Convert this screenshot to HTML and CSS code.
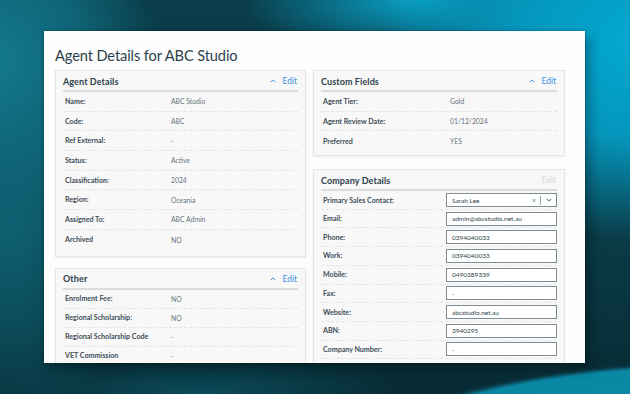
FILE: index.html
```html
<!DOCTYPE html>
<html>
<head>
<meta charset="utf-8">
<link rel="stylesheet" href="styles.css">
</head>
<body>
<div class="window">
  <h1 class="title">Agent Details for ABC Studio</h1>
  <div class="columns">
    <div class="col">
      <section class="panel">
        <div class="phead"><span class="ptitle">Agent Details</span><span class="actions"><svg class="chev" viewBox="0 0 8 5" width="6" height="4"><path d="M1 4 L4 1 L7 4" fill="none" stroke="#3a8ee0" stroke-width="1.3"/></svg><span class="edit">Edit</span></span></div>
        <div class="rows">
          <div class="row"><span class="lab">Name:</span><span class="val">ABC Studio</span></div>
          <div class="row"><span class="lab">Code:</span><span class="val">ABC</span></div>
          <div class="row"><span class="lab">Ref External:</span><span class="val">-</span></div>
          <div class="row"><span class="lab">Status:</span><span class="val">Active</span></div>
          <div class="row"><span class="lab">Classification:</span><span class="val">2024</span></div>
          <div class="row"><span class="lab">Region:</span><span class="val">Oceania</span></div>
          <div class="row"><span class="lab">Assigned To:</span><span class="val">ABC Admin</span></div>
          <div class="row last"><span class="lab">Archived</span><span class="val">NO</span></div>
        </div>
      </section>
      <section class="panel">
        <div class="phead"><span class="ptitle">Other</span><span class="actions"><svg class="chev" viewBox="0 0 8 5" width="6" height="4"><path d="M1 4 L4 1 L7 4" fill="none" stroke="#3a8ee0" stroke-width="1.3"/></svg><span class="edit">Edit</span></span></div>
        <div class="rows other">
          <div class="row"><span class="lab">Enrolment Fee:</span><span class="val">NO</span></div>
          <div class="row"><span class="lab">Regional Scholarship:</span><span class="val">NO</span></div>
          <div class="row"><span class="lab">Regional Scholarship Code</span><span class="val">-</span></div>
          <div class="row"><span class="lab">VET Commission</span><span class="val">-</span></div>
        </div>
      </section>
    </div>
    <div class="col">
      <section class="panel short">
        <div class="phead"><span class="ptitle">Custom Fields</span><span class="actions"><svg class="chev" viewBox="0 0 8 5" width="6" height="4"><path d="M1 4 L4 1 L7 4" fill="none" stroke="#3a8ee0" stroke-width="1.3"/></svg><span class="edit">Edit</span></span></div>
        <div class="rows">
          <div class="row"><span class="lab wide">Agent Tier:</span><span class="val">Gold</span></div>
          <div class="row"><span class="lab wide">Agent Review Date:</span><span class="val">01/12/2024</span></div>
          <div class="row last"><span class="lab wide">Preferred</span><span class="val">YES</span></div>
        </div>
      </section>
      <section class="panel">
        <div class="phead"><span class="ptitle">Company Details</span><span class="actions"><span class="edit muted">Edit</span></span></div>
        <div class="rows form">
          <div class="frow"><span class="lab">Primary Sales Contact:</span>
            <div class="input select"><span class="itext">Sarah Lee</span><span class="clear">×</span><span class="sep"></span><svg class="dd" viewBox="0 0 8 5" width="6" height="4"><path d="M1 1 L4 4 L7 1" fill="none" stroke="#3c4c56" stroke-width="1.2"/></svg></div></div>
          <div class="frow"><span class="lab">Email:</span><div class="input"><span class="itext">admin@abcstudio.net.au</span></div></div>
          <div class="frow"><span class="lab">Phone:</span><div class="input"><span class="itext">0394040033</span></div></div>
          <div class="frow"><span class="lab">Work:</span><div class="input"><span class="itext">0394040033</span></div></div>
          <div class="frow"><span class="lab">Mobile:</span><div class="input"><span class="itext">0490389339</span></div></div>
          <div class="frow"><span class="lab">Fax:</span><div class="input"><span class="itext">-</span></div></div>
          <div class="frow"><span class="lab">Website:</span><div class="input"><span class="itext">abcstudio.net.au</span></div></div>
          <div class="frow"><span class="lab">ABN:</span><div class="input"><span class="itext">3940295</span></div></div>
          <div class="frow"><span class="lab">Company Number:</span><div class="input"><span class="itext">-</span></div></div>
        </div>
      </section>
    </div>
  </div>
</div>
</body>
</html>
```
FILE: styles.css
```css
html, body {
  margin: 0;
  padding: 0;
}
body {
  width: 630px;
  height: 394px;
  overflow: hidden;
  box-sizing: border-box;
  padding: 31px 0 0 44px;
  font-family: Lato, "Noto Sans", sans-serif;
  background:
    radial-gradient(ellipse 420px 140px at 720px 500px, #0b8fab 0%, #0a87a3 95%, rgba(10,60,75,0.6) 98%, rgba(10,135,163,0) 100%),
    radial-gradient(ellipse 260px 200px at 640px 40px, #03a9d2 0%, #0595bb 50%, rgba(5,130,165,0) 100%),
    radial-gradient(ellipse 180px 60px at 420px 0px, #0aa2c8 0%, rgba(10,160,200,0) 100%),
    radial-gradient(ellipse 160px 200px at 0px 60px, #13788c 0%, #0f6476 50%, rgba(15,100,118,0) 100%),
    radial-gradient(ellipse 120px 220px at 10px 230px, #0e5f70 0%, rgba(14,95,112,0) 100%),
    radial-gradient(ellipse 200px 40px at 200px 394px, #0b4b5a 0%, rgba(11,75,90,0) 100%),
    linear-gradient(180deg, #0a3c49 0%, #0a3b47 60%, #072b34 100%);
}
.window {
  width: 541px;
  height: 332px;
  background: #fdfdfd;
  box-shadow: 0 0 3px rgba(0,0,0,0.35), 6px 6px 10px rgba(0,0,0,0.25);
  box-sizing: border-box;
  padding: 0 20px 0 11px;
  overflow: hidden;
}
.title {
  margin: 0;
  padding-top: 14px;
  height: 39px;
  box-sizing: border-box;
  font-weight: 400;
  font-size: 14.6px;
  line-height: 22px;
  color: #2c3f4b;
  letter-spacing: -0.1px;
}
.columns {
  display: grid;
  grid-template-columns: 251px 252px;
  column-gap: 7px;
}
.col {
  display: flex;
  flex-direction: column;
  gap: 11px;
}
.col + .col { gap: 13px; }
.panel {
  background: #f8f8f8;
  border: 1px solid #e4e5e5;
  box-shadow: 0 1px 2px rgba(0,0,0,0.06);
  padding: 0 7px 6px;
}
.panel.short { padding-bottom: 4px; }
.phead {
  height: 21px;
  box-sizing: border-box;
  padding-top: 1px;
  border-bottom: 2px solid #d9dddf;
  display: flex;
  align-items: center;
  justify-content: space-between;
}
.ptitle {
  font-weight: 700;
  font-size: 9px;
  color: #2d3f4c;
  letter-spacing: 0.1px;
}
.actions {
  display: flex;
  align-items: center;
  gap: 6px;
}
.chev { display: block; }
.edit {
  font-size: 8.5px;
  color: #3a8ee0;
  padding-right: 1px;
}
.edit.muted { color: #d4d8da; }
.row {
  display: flex;
  align-items: center;
  height: 19.7px;
  box-sizing: border-box;
  border-bottom: 1px dashed #e2e4e5;
  padding-left: 2px;
}
.row.last { border-bottom: none; }
.other .row { height: 19px; }
.lab {
  width: 106px;
  flex: none;
  font-size: 7.1px;
  font-weight: 700;
  color: #3d4d58;
}
.lab.wide { width: 127px; }
.val {
  font-size: 6.8px;
  color: #66747c;
}
.frow {
  display: flex;
  align-items: center;
  justify-content: space-between;
  height: 18.7px;
  box-sizing: border-box;
  border-bottom: 1px dashed #e2e4e5;
  padding-left: 2px;
}
.frow:first-child { padding-top: 1px; }
.input {
  width: 111px;
  height: 14px;
  box-sizing: border-box;
  border: 1px solid #7d8d94;
  border-bottom-width: 1.5px;
  background: #fff;
  display: flex;
  align-items: center;
  padding: 0 4px 0 5px;
}
.itext {
  font-size: 6.5px;
  color: #2f3f49;
  flex: 1;
}
.select .clear {
  font-size: 7px;
  color: #6b7a82;
  margin-right: 4px;
}
.select .sep {
  width: 1px;
  height: 9px;
  background: #9aa6ab;
  margin-right: 5px;
}
.dd { display: block; }
```
